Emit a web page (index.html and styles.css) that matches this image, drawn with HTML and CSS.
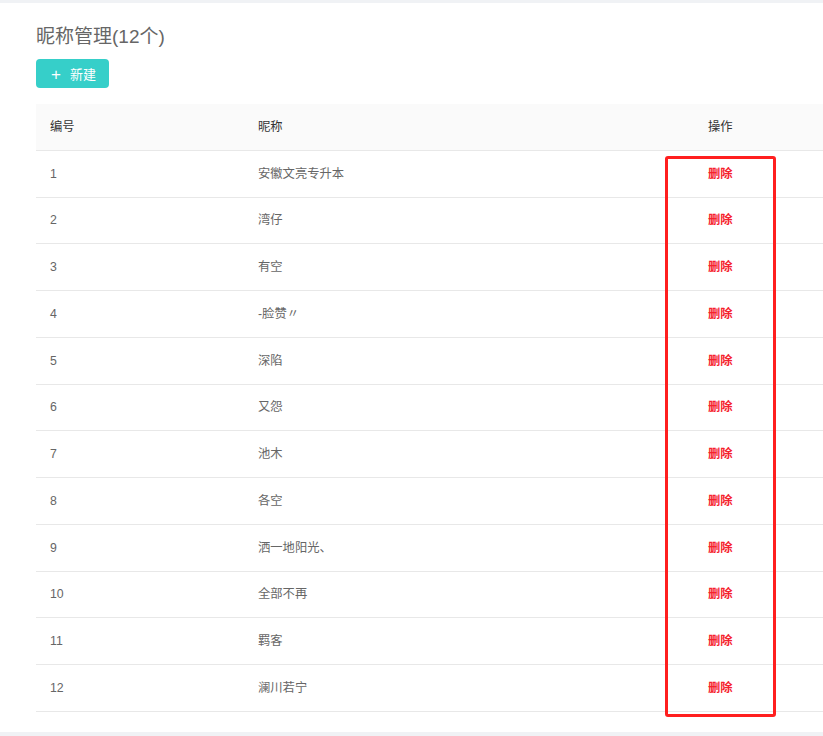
FILE: index.html
```html
<!DOCTYPE html>
<html lang="zh-CN">
<head>
    <meta charset="UTF-8">
    <meta name="viewport" content="width=device-width, initial-scale=1.0">
    <title>昵称管理</title>
    <link rel="stylesheet" href="styles.css">
</head>
<body>
    <div class="panel">
        <h2 class="title">昵称管理(12个)</h2>
        <button class="btn-new"><span class="plus">+</span>新建</button>
        <table class="list">
            <colgroup>
                <col class="col-id">
                <col class="col-name">
                <col class="col-op">
            </colgroup>
            <thead>
                <tr>
                    <th>编号</th>
                    <th>昵称</th>
                    <th>操作</th>
                </tr>
            </thead>
            <tbody>
                <tr><td>1</td><td>安徽文亮专升本</td><td><a class="del">删除</a></td></tr>
                <tr><td>2</td><td>湾仔</td><td><a class="del">删除</a></td></tr>
                <tr><td>3</td><td>有空</td><td><a class="del">删除</a></td></tr>
                <tr><td>4</td><td>-脸赞〃</td><td><a class="del">删除</a></td></tr>
                <tr><td>5</td><td>深陷</td><td><a class="del">删除</a></td></tr>
                <tr><td>6</td><td>又怨</td><td><a class="del">删除</a></td></tr>
                <tr><td>7</td><td>池木</td><td><a class="del">删除</a></td></tr>
                <tr><td>8</td><td>各空</td><td><a class="del">删除</a></td></tr>
                <tr><td>9</td><td>洒一地阳光、</td><td><a class="del">删除</a></td></tr>
                <tr><td>10</td><td>全部不再</td><td><a class="del">删除</a></td></tr>
                <tr><td>11</td><td>羁客</td><td><a class="del">删除</a></td></tr>
                <tr><td>12</td><td>澜川若宁</td><td><a class="del">删除</a></td></tr>
            </tbody>
        </table>
        <div class="highlight"></div>
    </div>
</body>
</html>
```

FILE: styles.css
```css
body {
    margin: 0;
    padding-top: 3px;
    background-color: #f0f2f5;
    font-family: "Liberation Sans", "Noto Sans CJK SC", sans-serif;
    overflow: hidden;
}

.panel {
    position: relative;
    background-color: #fff;
    padding: 22px 0 20px 36px;
    overflow: hidden;
}

.title {
    margin: 0 0 10px;
    font-size: 19px;
    line-height: 24px;
    font-weight: normal;
    color: #666;
}

.btn-new {
    display: block;
    height: 29px;
    padding: 0 13px 0 15px;
    margin-bottom: 16px;
    border: none;
    border-radius: 4px;
    background-color: #36cfc9;
    color: #fff;
    font-family: inherit;
    font-size: 13px;
    cursor: pointer;
}

.plus {
    font-size: 17px;
    margin-right: 9px;
    position: relative;
    top: 1px;
}

.list {
    width: 900px;
    table-layout: fixed;
    border-collapse: collapse;
    font-size: 12.3px;
}

.col-id {
    width: 206px;
}

.col-name {
    width: 450px;
}

.list th,
.list td {
    padding: 13.875px 16px;
    line-height: 18px;
    text-align: left;
    border-bottom: 1px solid #e8e8e8;
}

.list th:first-child,
.list td:first-child {
    padding-left: 14px;
}

.list th {
    background-color: #fafafa;
    font-weight: normal;
    color: #333;
}

.list td {
    color: #666;
}

.del {
    color: #f5222d;
    font-weight: bold;
    cursor: pointer;
}

/* annotation box over the action column */
.highlight {
    position: absolute;
    left: 665px;
    top: 153px;
    width: 105px;
    height: 555px;
    border: 3px solid #ff1f1f;
    border-radius: 3px;
}
```
